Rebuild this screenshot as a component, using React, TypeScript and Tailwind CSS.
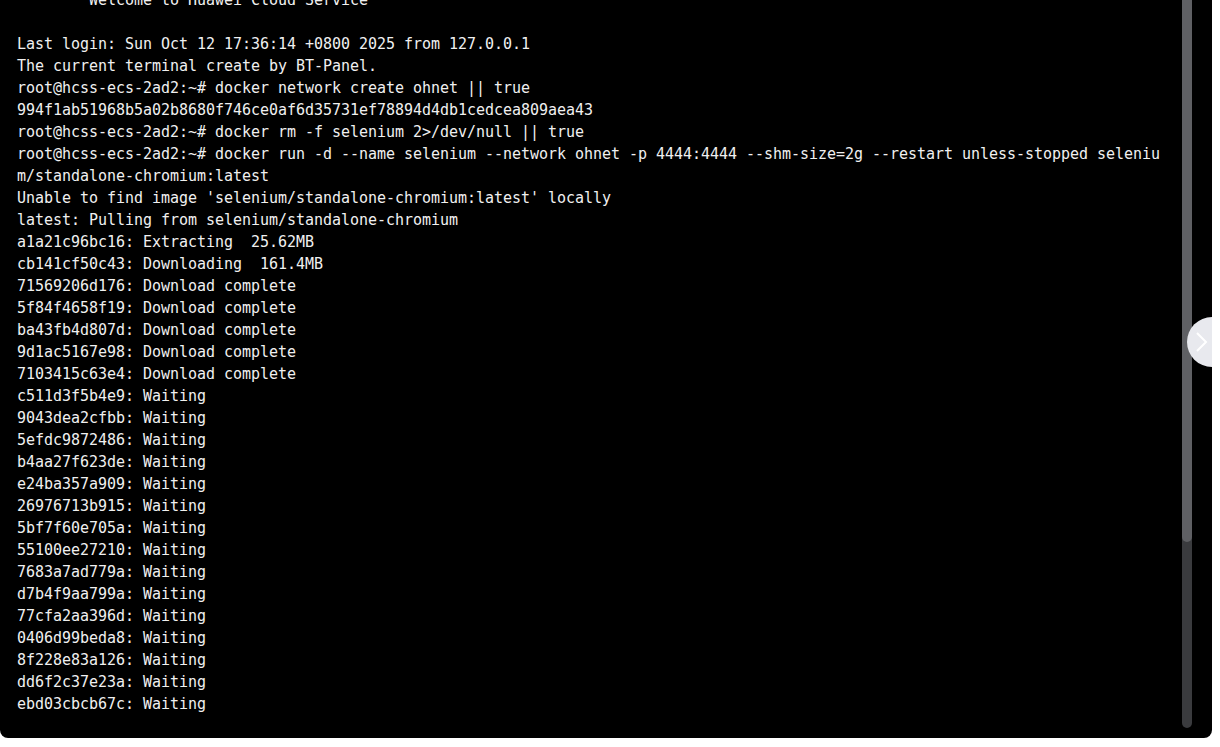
const lines = [
  "        Welcome to Huawei Cloud Service",
  "",
  "Last login: Sun Oct 12 17:36:14 +0800 2025 from 127.0.0.1",
  "The current terminal create by BT-Panel.",
  "root@hcss-ecs-2ad2:~# docker network create ohnet || true",
  "994f1ab51968b5a02b8680f746ce0af6d35731ef78894d4db1cedcea809aea43",
  "root@hcss-ecs-2ad2:~# docker rm -f selenium 2>/dev/null || true",
  "root@hcss-ecs-2ad2:~# docker run -d --name selenium --network ohnet -p 4444:4444 --shm-size=2g --restart unless-stopped seleniu",
  "m/standalone-chromium:latest",
  "Unable to find image 'selenium/standalone-chromium:latest' locally",
  "latest: Pulling from selenium/standalone-chromium",
  "a1a21c96bc16: Extracting  25.62MB",
  "cb141cf50c43: Downloading  161.4MB",
  "71569206d176: Download complete",
  "5f84f4658f19: Download complete",
  "ba43fb4d807d: Download complete",
  "9d1ac5167e98: Download complete",
  "7103415c63e4: Download complete",
  "c511d3f5b4e9: Waiting",
  "9043dea2cfbb: Waiting",
  "5efdc9872486: Waiting",
  "b4aa27f623de: Waiting",
  "e24ba357a909: Waiting",
  "26976713b915: Waiting",
  "5bf7f60e705a: Waiting",
  "55100ee27210: Waiting",
  "7683a7ad779a: Waiting",
  "d7b4f9aa799a: Waiting",
  "77cfa2aa396d: Waiting",
  "0406d99beda8: Waiting",
  "8f228e83a126: Waiting",
  "dd6f2c37e23a: Waiting",
  "ebd03cbcb67c: Waiting",
];

export default function App() {
  return (
    <div className="h-[747px] w-[1220px] overflow-hidden bg-white">
      {/* terminal window */}
      <div className="relative flex h-[738px] w-[1212px] overflow-hidden rounded-b-lg bg-black">
        {/* output, scrolled so the banner line sits half off the top */}
        <div className="flex-1 overflow-hidden pl-[17px]">
          <div
            className="-mt-[11px] flex flex-col text-[15px] leading-[22px] tracking-[-0.03px] text-[#f0f0f0]"
            style={{ fontFamily: '"DejaVu Sans Mono", "Liberation Mono", monospace' }}
          >
            {lines.map((l, i) => (
              <div key={i} className="h-[22px] whitespace-pre">
                {l}
              </div>
            ))}
          </div>
        </div>

        {/* scrollbar */}
        <div className="mr-[20px] flex h-[728px] w-[10px] flex-col overflow-hidden rounded-b-full bg-[#3a3b3e]">
          <div className="h-[542px] rounded-b-full bg-[#5f6064]" />
        </div>

        {/* side toggle */}
        <button className="absolute left-[1187px] top-[317px] flex h-[50px] w-[50px] items-start rounded-full bg-[#e8e9ee]">
          <svg width="30" height="50" viewBox="0 0 30 50" fill="none">
            <polyline points="10,16 19,25 10,34" stroke="#ffffff" strokeWidth="2" />
          </svg>
        </button>
      </div>
    </div>
  );
}
